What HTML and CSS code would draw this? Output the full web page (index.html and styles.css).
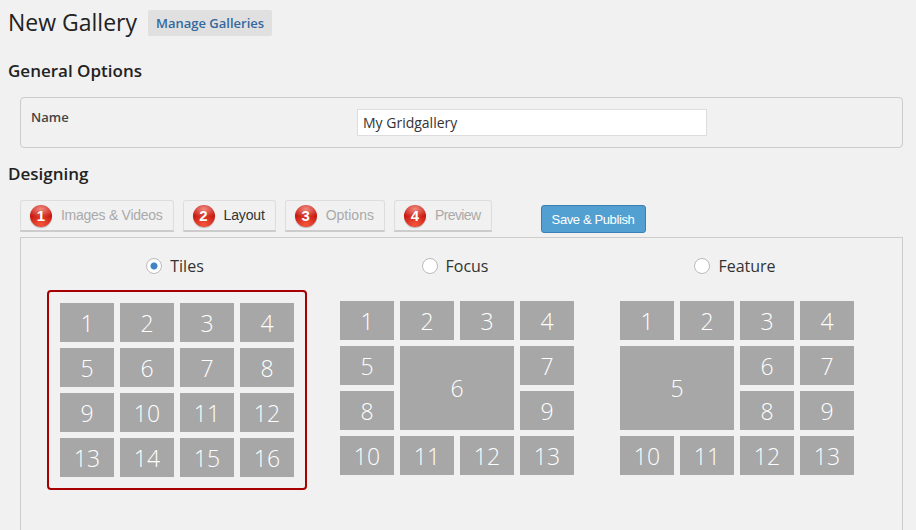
FILE: index.html
```html
<!doctype html>
<html lang="en">
	<head>
		<meta charset="UTF-8">
		<title>New Gallery</title>
		<link rel="stylesheet" href="styles.css">
	</head>
	<body>
		<div class="titre">
			<h1>New Gallery</h1>
			<a class="gerer" href="#">Manage Galleries</a>
		</div>
		<h3 class="section">General Options</h3>
		<div class="options">
			<label class="etiquette" for="nom">Name</label>
			<input class="nom" type="text" id="nom" value="My Gridgallery">
		</div>
		<h3 class="section designing">Designing</h3>
		<div class="barre">
			<a class="onglet" href="#"><span class="pastille">1</span>Images &amp; Videos</a>
			<a class="onglet actif" href="#"><span class="pastille">2</span>Layout</a>
			<a class="onglet large" href="#"><span class="pastille">3</span>Options</a>
			<a class="onglet serre" href="#"><span class="pastille">4</span>Preview</a>
			<a class="publier" href="#">Save &amp; Publish</a>
		</div>
		<div class="panneau">
			<div class="choix">
				<div class="radio"><span class="rond coche"></span>Tiles</div>
				<div class="grille selection">
					<div class="case">1</div>
					<div class="case">2</div>
					<div class="case">3</div>
					<div class="case">4</div>
					<div class="case">5</div>
					<div class="case">6</div>
					<div class="case">7</div>
					<div class="case">8</div>
					<div class="case">9</div>
					<div class="case">10</div>
					<div class="case">11</div>
					<div class="case">12</div>
					<div class="case">13</div>
					<div class="case">14</div>
					<div class="case">15</div>
					<div class="case">16</div>
				</div>
			</div>
			<div class="choix">
				<div class="radio"><span class="rond"></span>Focus</div>
				<div class="grille">
					<div class="case">1</div>
					<div class="case">2</div>
					<div class="case">3</div>
					<div class="case">4</div>
					<div class="case">5</div>
					<div class="case grande">6</div>
					<div class="case">7</div>
					<div class="case">8</div>
					<div class="case">9</div>
					<div class="case">10</div>
					<div class="case">11</div>
					<div class="case">12</div>
					<div class="case">13</div>
				</div>
			</div>
			<div class="choix">
				<div class="radio"><span class="rond"></span>Feature</div>
				<div class="grille">
					<div class="case">1</div>
					<div class="case">2</div>
					<div class="case">3</div>
					<div class="case">4</div>
					<div class="case grande">5</div>
					<div class="case">6</div>
					<div class="case">7</div>
					<div class="case">8</div>
					<div class="case">9</div>
					<div class="case">10</div>
					<div class="case">11</div>
					<div class="case">12</div>
					<div class="case">13</div>
				</div>
			</div>
		</div>
	</body>
</html>
```

FILE: styles.css
```css
html
{
	height: 100%;
	overflow: hidden;
}
body
{
	margin: 0;
	height: 530px;
	overflow: hidden;
	padding: 0 13px 0 8px;
	background: #f1f1f1;
	font-family: "Open Sans", sans-serif;
	color: #222;
}
.titre
{
	display: flex;
	align-items: center;
	height: 46px;
}
h1
{
	margin: -3px 0 0 0;
	font-size: 23px;
	font-weight: 400;
}
.gerer
{
	margin-left: 11px;
	padding: 0 8px;
	height: 26px;
	line-height: 26px;
	background: #e0e0e0;
	border-radius: 2px;
	font-size: 13px;
	font-weight: 600;
	color: #34689f;
	text-decoration: none;
}
.section
{
	margin: 12px 0 0 0;
	height: 26px;
	line-height: 26px;
	font-size: 17px;
	font-weight: 600;
}
.designing
{
	margin-top: 13px;
}
.options
{
	display: flex;
	box-sizing: border-box;
	margin: 13px 0 0 12px;
	height: 51px;
	padding: 11px 10px 0 10px;
	border: 1px solid #ccc;
	border-radius: 4px;
}
.etiquette
{
	width: 326px;
	margin-top: -1px;
	font-size: 13px;
	font-weight: 600;
	color: #444;
}
.nom
{
	box-sizing: border-box;
	width: 350px;
	height: 27px;
	margin: 0;
	padding: 0 5px;
	border: 1px solid #ddd;
	background: #fff;
	font-family: "Open Sans", sans-serif;
	font-size: 14px;
	color: #333;
}
.barre
{
	display: flex;
	align-items: flex-start;
	gap: 9px;
	margin: 13px 0 0 12px;
}
.onglet
{
	display: flex;
	align-items: center;
	box-sizing: border-box;
	height: 32px;
	padding: 0 10px 2px 9px;
	border: 1px solid #ddd;
	border-bottom: 2px solid #ccc;
	border-radius: 3px 3px 0 0;
	font-family: "Liberation Sans", sans-serif;
	font-size: 14px;
	letter-spacing: -0.27px;
	color: #aaa;
	text-decoration: none;
}
.actif
{
	letter-spacing: -0.15px;
	color: #333;
}
.large
{
	letter-spacing: 0;
}
.serre
{
	letter-spacing: -0.6px;
}
.pastille
{
	width: 22px;
	height: 22px;
	margin: 2px 9px 0 0;
	border-radius: 50%;
	background:
		radial-gradient(ellipse 70% 45% at 50% 88%, #f4553c 0%, rgba(244, 85, 60, 0) 100%),
		radial-gradient(ellipse 65% 40% at 50% 18%, #f08a80 0%, rgba(240, 138, 128, 0) 100%),
		radial-gradient(circle at 50% 50%, #d0231a 0%, #c81a10 65%, #8e0f08 100%);
	box-shadow: 0 1px 1px rgba(0, 0, 0, 0.25);
	font-weight: 700;
	font-size: 15px;
	line-height: 22px;
	letter-spacing: 0;
	text-align: center;
	color: #fff;
}
.publier
{
	box-sizing: border-box;
	width: 105px;
	height: 28px;
	margin: 5px 0 0 40px;
	line-height: 27px;
	background: #52a0d2;
	border: 1px solid #3b80b4;
	border-radius: 3px;
	font-family: "Liberation Sans", sans-serif;
	font-size: 13px;
	letter-spacing: -0.38px;
	text-align: center;
	color: #fff;
	text-decoration: none;
}
.panneau
{
	display: flex;
	box-sizing: border-box;
	height: 293px;
	margin: 4px 0 0 12px;
	padding: 0 0 0 39px;
	border: 1px solid #ccc;
	border-bottom: 0;
}
.choix
{
	width: 280px;
}
.radio
{
	display: flex;
	align-items: center;
	justify-content: center;
	width: 234px;
	height: 24px;
	margin-top: 16px;
	padding-right: 4px;
	box-sizing: border-box;
	font-size: 16px;
	color: #333;
}
.rond
{
	box-sizing: border-box;
	width: 16px;
	height: 16px;
	margin-right: 8px;
	border: 1px solid #bbb;
	border-radius: 50%;
	background: #fff;
}
.coche
{
	background: radial-gradient(circle, #4285c4 0, #4285c4 3px, #fff 4px);
}
.grille
{
	display: grid;
	grid-template-columns: repeat(4, 54px);
	grid-auto-rows: 39px;
	gap: 6px;
	width: 234px;
	margin-top: 23px;
}
.selection
{
	margin: 12px -13px 0 -13px;
	padding: 11px;
	border: 2px solid #a80000;
	border-radius: 4px;
}
.case
{
	display: flex;
	align-items: center;
	justify-content: center;
	background: #a7a7a7;
	font-size: 23px;
	font-weight: 300;
	color: #fff;
}
.grande
{
	grid-column: span 2;
	grid-row: span 2;
}
```
